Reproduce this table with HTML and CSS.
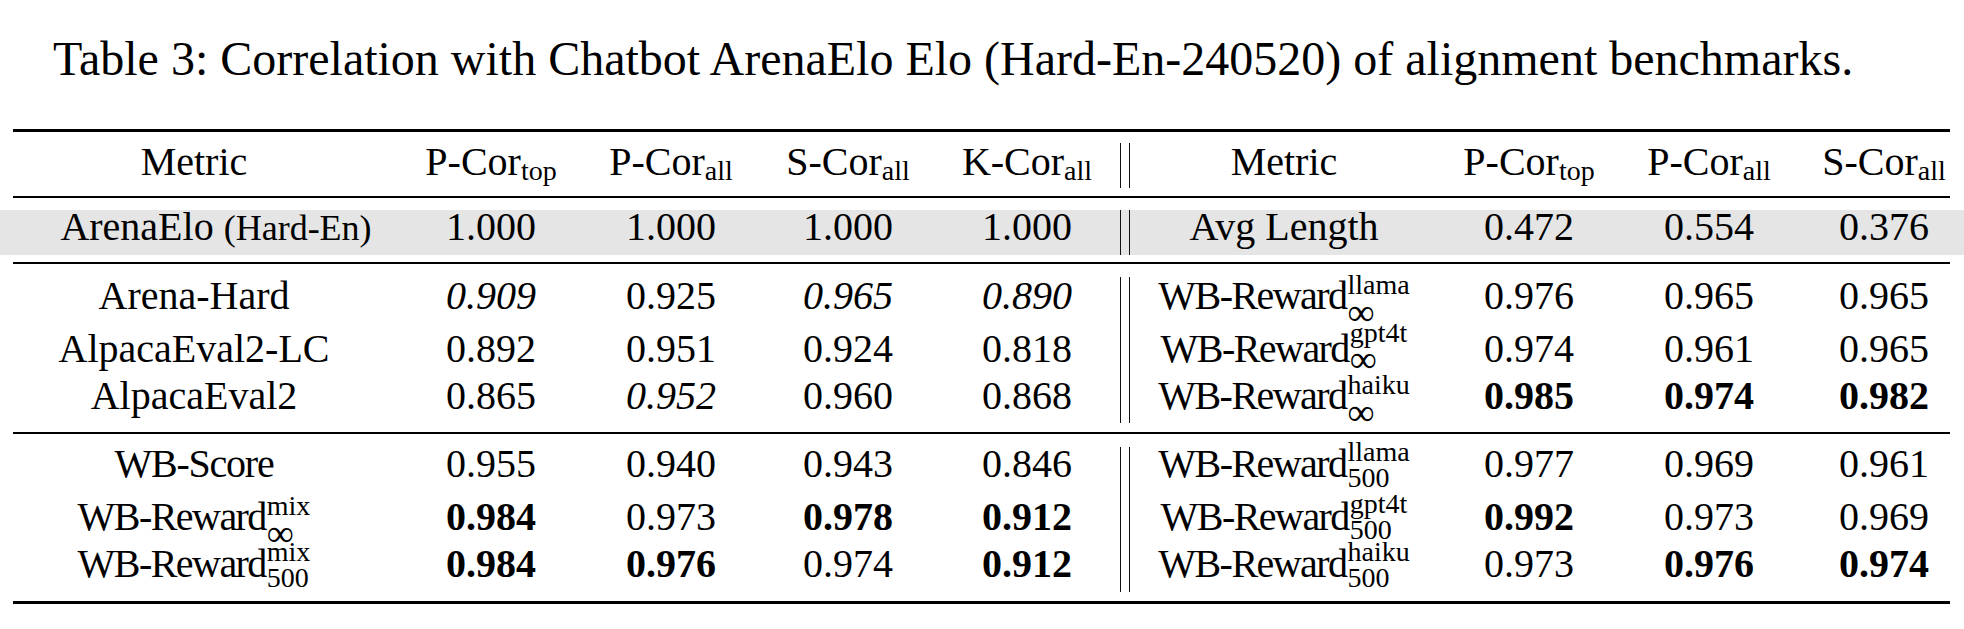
FILE: index.html
```html
<!DOCTYPE html>
<html lang="en">
<head>
<meta charset="utf-8">
<title>Table 3</title>
<link rel="stylesheet" href="styles.css">
</head>
<body>
<div class="page">
  <p class="caption">Table 3: Correlation with Chatbot ArenaElo Elo (Hard-En-240520) of alignment benchmarks.</p>
  <div class="table">
    <div class="rule thick"></div>
    <div class="grp head">
      <div>Metric</div>
      <div>P-Cor<span class="sb">top</span></div>
      <div>P-Cor<span class="sb">all</span></div>
      <div>S-Cor<span class="sb">all</span></div>
      <div>K-Cor<span class="sb">all</span></div>
      <div class="vsep"></div>
      <div>Metric</div>
      <div>P-Cor<span class="sb">top</span></div>
      <div>P-Cor<span class="sb">all</span></div>
      <div class="last">S-Cor<span class="sb">all</span></div>
    </div>
    <div class="rule"></div>
    <div class="grp shade">
      <div class="shift">ArenaElo <span class="sm">(Hard-En)</span></div>
      <div>1.000</div>
      <div>1.000</div>
      <div>1.000</div>
      <div>1.000</div>
      <div class="vsep"></div>
      <div>Avg Length</div>
      <div>0.472</div>
      <div>0.554</div>
      <div class="last">0.376</div>
    </div>
    <div class="rule"></div>
    <div class="grp b1">
      <div>Arena-Hard</div>
      <div class="i">0.909</div>
      <div>0.925</div>
      <div class="i">0.965</div>
      <div class="i">0.890</div>
      <div class="vsep"></div>
      <div><span class="wbr">WB-Reward</span><span class="ss"><span>llama</span><span class="inf">∞</span></span></div>
      <div>0.976</div>
      <div>0.965</div>
      <div class="last">0.965</div>

      <div>AlpacaEval2-LC</div>
      <div>0.892</div>
      <div>0.951</div>
      <div>0.924</div>
      <div>0.818</div>
      <div><span class="wbr">WB-Reward</span><span class="ss hi"><span>gpt4t</span><span class="inf">∞</span></span></div>
      <div>0.974</div>
      <div>0.961</div>
      <div class="last">0.965</div>

      <div>AlpacaEval2</div>
      <div>0.865</div>
      <div class="i">0.952</div>
      <div>0.960</div>
      <div>0.868</div>
      <div><span class="wbr">WB-Reward</span><span class="ss"><span>haiku</span><span class="inf">∞</span></span></div>
      <div class="b">0.985</div>
      <div class="b">0.974</div>
      <div class="b last">0.982</div>
    </div>
    <div class="rule"></div>
    <div class="grp b2">
      <div><span class="wbs">WB-Score</span></div>
      <div>0.955</div>
      <div>0.940</div>
      <div>0.943</div>
      <div>0.846</div>
      <div class="vsep"></div>
      <div><span class="wbr">WB-Reward</span><span class="ss n5"><span>llama</span><span>500</span></span></div>
      <div>0.977</div>
      <div>0.969</div>
      <div class="last">0.961</div>

      <div><span class="wbr">WB-Reward</span><span class="ss"><span>mix</span><span class="inf">∞</span></span></div>
      <div class="b">0.984</div>
      <div>0.973</div>
      <div class="b">0.978</div>
      <div class="b">0.912</div>
      <div><span class="wbr">WB-Reward</span><span class="ss n5 hi5"><span>gpt4t</span><span>500</span></span></div>
      <div class="b">0.992</div>
      <div>0.973</div>
      <div class="last">0.969</div>

      <div><span class="wbr">WB-Reward</span><span class="ss n5"><span>mix</span><span>500</span></span></div>
      <div class="b">0.984</div>
      <div class="b">0.976</div>
      <div>0.974</div>
      <div class="b">0.912</div>
      <div><span class="wbr">WB-Reward</span><span class="ss n5"><span>haiku</span><span>500</span></span></div>
      <div>0.973</div>
      <div class="b">0.976</div>
      <div class="b last">0.974</div>
    </div>
    <div class="rule thick"></div>
  </div>
</div>
</body>
</html>
```

FILE: styles.css
```css
html, body {
  margin: 0;
  padding: 0;
  background: #ffffff;
}

body {
  font-family: "Liberation Serif", "Times New Roman", serif;
  color: #000000;
  overflow: hidden;
}

.page {
  width: 1964px;
  height: 629px;
}

.caption {
  margin: 0 0 42px 0;
  padding: 31px 0 0 53px;
  height: 56px;
  font-size: 48px;
  line-height: 56px;
  white-space: nowrap;
}

.rule {
  margin: 0 14px 0 13px;
  height: 2px;
  background: #000000;
}

.rule.thick {
  height: 3px;
}

.grp {
  display: grid;
  grid-template-columns: 362px 232px 128px 226px 132px 64px 254px 236px 124px 47px 132px;
  padding-left: 13px;
  font-size: 40px;
  line-height: 48px;
  text-align: center;
}

.grp > div {
  align-self: start;
  white-space: nowrap;
}

.grp > .last {
  grid-column: 11;
}

.grp > .vsep {
  grid-column: 6;
  grid-row: 1 / -1;
  align-self: stretch;
  justify-self: start;
  margin-left: 27px;
  width: 7.9px;
  border-left: 1.4px solid #111111;
  border-right: 1.4px solid #111111;
}

.head {
  padding-top: 5.5px;
  grid-template-rows: 58.5px;
}

.head > .vsep {
  margin-top: 5.5px;
  margin-bottom: 8px;
}

.shade {
  margin: 12px 0 7px 0;
  background: #e5e5e5;
  grid-template-rows: 45px;
  line-height: 33px;
}

.b1 {
  padding-top: 8px;
  padding-bottom: 9px;
  grid-template-rows: 53px 47px 51px;
}

.b1 > .vsep {
  margin-top: 5px;
}

.b2 {
  padding-top: 5.5px;
  padding-bottom: 9px;
  grid-template-rows: 53.5px 47px 52px;
}

.b2 > .vsep {
  margin-top: 7.5px;
}

.shift {
  padding-left: 44px;
}

.sm {
  font-size: 36px;
}

.i {
  font-style: italic;
}

.b {
  font-weight: bold;
}

.wbr {
  letter-spacing: -1.55px;
}

.wbs {
  letter-spacing: -1.25px;
}

.sb {
  font-size: 28px;
  line-height: 0;
  vertical-align: -5px;
}

.ss {
  display: inline-flex;
  flex-direction: column;
  align-items: flex-start;
  font-size: 28px;
  line-height: 25px;
  vertical-align: 15px;
  margin: -14px 0 -14px 1px;
  text-align: left;
}

.ss.hi {
  vertical-align: 20px;
  line-height: 24px;
}

.ss.n5 {
  line-height: 26px;
  vertical-align: 16px;
}

.ss.hi5 {
  vertical-align: 17px;
}

.ss > .inf {
  font-size: 38px;
  line-height: 30px;
}

.ss.hi > .inf {
  line-height: 28px;
}
```
